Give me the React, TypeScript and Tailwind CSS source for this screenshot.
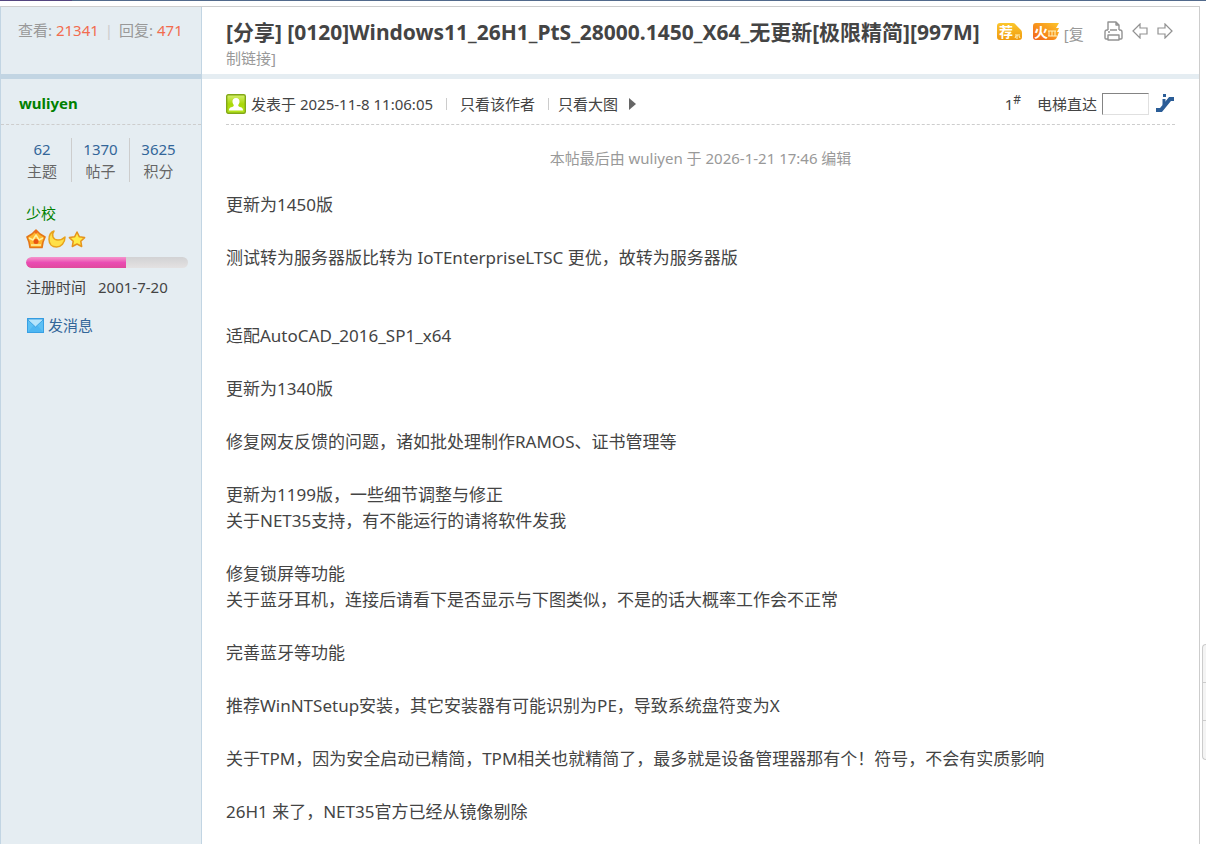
import { Fragment } from 'react';

interface Paragraph {
  lines: string[];
  wide?: boolean;
}

const stats = [
  { label: '主题', value: 62 },
  { label: '帖子', value: 1370 },
  { label: '积分', value: 3625 },
];

const paragraphs: Paragraph[] = [
  { lines: ['更新为1450版'] },
  { lines: ['测试转为服务器版比转为 IoTEnterpriseLTSC 更优，故转为服务器版'], wide: true },
  { lines: ['适配AutoCAD_2016_SP1_x64'] },
  { lines: ['更新为1340版'] },
  { lines: ['修复网友反馈的问题，诸如批处理制作RAMOS、证书管理等'] },
  { lines: ['更新为1199版，一些细节调整与修正', '关于NET35支持，有不能运行的请将软件发我'] },
  { lines: ['修复锁屏等功能', '关于蓝牙耳机，连接后请看下是否显示与下图类似，不是的话大概率工作会不正常'] },
  { lines: ['完善蓝牙等功能'] },
  { lines: ['推荐WinNTSetup安装，其它安装器有可能识别为PE，导致系统盘符变为X'] },
  { lines: ['关于TPM，因为安全启动已精简，TPM相关也就精简了，最多就是设备管理器那有个！符号，不会有实质影响'] },
  { lines: ['26H1 来了，NET35官方已经从镜像剔除'] },
];

function RecommendBadge() {
  return (
    <svg width="27" height="20" viewBox="0 0 27 20" aria-hidden="true">
      <defs>
        <linearGradient id="rec" x1="0" y1="0" x2="0" y2="1">
          <stop offset="0" stopColor="#fbc62c" />
          <stop offset="1" stopColor="#f09a0e" />
        </linearGradient>
      </defs>
      <path d="M4 1h13q2 0 3 2l5 5q1 1 1 3v4q0 3-3 3H4q-3 0-3-3V4q0-3 3-3z" fill="url(#rec)" />
      <text x="3" y="15" fontSize="14" fontWeight="700" fill="#fff">荐</text>
      <path d="M19 13h5M21 13v4M19 16l1-2M24 16l-1-2" stroke="#fff3c0" strokeWidth="1" fill="none" />
    </svg>
  );
}

function HotBadge() {
  return (
    <svg width="28" height="20" viewBox="0 0 28 20" aria-hidden="true">
      <defs>
        <linearGradient id="hot" x1="0" y1="1" x2="1" y2="0">
          <stop offset="0" stopColor="#f0601c" />
          <stop offset="0.5" stopColor="#f8941c" />
          <stop offset="1" stopColor="#fcc62c" />
        </linearGradient>
      </defs>
      <path d="M4 1h23l-3 5h3l-2 4h2l-2 5q-1 3-4 3H4q-3 0-3-3V4q0-3 3-3z" fill="url(#hot)" />
      <text x="2" y="15" fontSize="14" fontWeight="700" fill="#fff">火</text>
      <path d="M16 9h8M17 9v5M20 9v5M23 9v5M16 14h9" stroke="#fff3c0" strokeWidth="1" fill="none" />
    </svg>
  );
}

function PrintIcon() {
  return (
    <svg width="19" height="20" viewBox="0 0 19 20" fill="none" stroke="#929292" strokeWidth="1.4" strokeLinejoin="round">
      <path d="M4 9V1h8l3 3v5M12 1v3h3" />
      <path d="M4 9H3q-2 0-2 2v6q0 1 1 1h2M15 9h1q2 0 2 2v6q0 1-1 1h-2M6 9h7" />
      <path d="M4 14h11v5H4zM4 11h2" />
    </svg>
  );
}

function ArrowIcon({ flip }: { flip?: boolean }) {
  return (
    <svg
      className={flip ? 'rotate-180' : ''}
      width="16"
      height="16"
      viewBox="0 0 16 16"
      fill="none"
      stroke="#929292"
      strokeWidth="1.2"
      strokeLinejoin="miter"
    >
      <path d="M1 8l7-7v4h7v6H8v4z" />
    </svg>
  );
}

function OnlineIcon() {
  return (
    <svg width="20" height="20" viewBox="0 0 20 20" aria-hidden="true">
      <defs>
        <linearGradient id="online" x1="0" y1="0" x2="0" y2="1">
          <stop offset="0" stopColor="#d6f070" />
          <stop offset="0.5" stopColor="#a9d808" />
          <stop offset="1" stopColor="#b6e61e" />
        </linearGradient>
      </defs>
      <rect x="0.7" y="0.7" width="18.6" height="18.6" rx="1.5" fill="url(#online)" stroke="#82a818" strokeWidth="1.4" />
      <path d="M10 4c2.6 0 3.8 1.8 3.5 4-.2 1.5-.8 2.2-1.3 3 0 1.5 1 1.7 2.8 2.3 1.5.5 2 1.5 2 3.2H3c0-1.7.5-2.7 2-3.2 1.8-.6 2.8-.8 2.8-2.300-.5-.8-1.100-1.500-1.300-3C6.200 5.800 7.400 4 10 4z" fill="#fff" />
    </svg>
  );
}

function ElevatorIcon() {
  return (
    <svg width="20" height="19" viewBox="0 0 20 19" aria-hidden="true">
      <path d="M1 16h5L15 5h4" fill="none" stroke="#2b5d97" strokeWidth="4" />
      <path d="M9 5v6" stroke="#2b5d97" strokeWidth="3" />
      <rect x="8" y="0" width="3" height="3" fill="#2b5d97" />
    </svg>
  );
}

function RankIcons() {
  return (
    <svg width="60" height="20" viewBox="0 0 60 20" role="img" aria-label="少校" strokeLinejoin="round">
      <path d="M4 18.500L3 13 1 8l5-3 4-4 4 4 5 3-2 5-1 5.500z" fill="#ffb62e" stroke="#e37618" strokeWidth="1.600" />
      <path d="M3 9l4 2 3-5 3 5 4-2M5 16h10" fill="none" stroke="#fff0a0" strokeWidth="1.500" />
      <circle cx="10" cy="12.500" r="2.500" fill="#e85412" />
      <circle cx="10" cy="3" r="1.500" fill="#f06820" />
      <path d="M28 2c-3 4-1 9 4 9 3 0 5-1 7-3 0 6-4 10-8.500 10C26 18 23 15 23 10.500 23 6 25 3 28 2z" fill="#ffe048" stroke="#e8a21c" strokeWidth="1.500" />
      <path d="M51 3l2.400 4.800 5.200.8-3.800 3.700.9 5.200L51 15l-4.700 2.500.9-5.200-3.800-3.700 5.200-.8z" fill="#ffec48" stroke="#e6941c" strokeWidth="1.500" />
    </svg>
  );
}

function MailIcon() {
  return (
    <svg width="17" height="15" viewBox="0 0 17 15" aria-hidden="true">
      <rect x="0.500" y="0.500" width="16" height="14" fill="#5cc0f4" stroke="#38a0e4" />
      <path d="M1 14l5-6h5l5 6z" fill="#4db6f2" />
      <path d="M1 2l7.500 7L16 2V1H1z" fill="#b4e4fc" stroke="#2e98dc" strokeWidth="0.800" />
    </svg>
  );
}

function Sidebar() {
  return (
    <aside className="w-[201px] shrink-0 border-r border-[#c2d5e3] bg-[#e5edf2]">
      <div className="border-b border-dashed border-[#cdcdcd] px-[18px] pt-3 pb-[9px] leading-6">
        <a href="#user" className="font-bold text-[#008000]">wuliyen</a>
      </div>
      <div className="mx-3 mt-[13px] flex text-center leading-[22px]">
        {stats.map((s, i) => (
          <div key={s.label} className={i ? 'w-[58px] border-l border-[#cdcdcd]' : 'w-[58px]'}>
            <a href="#stat" className="block text-[#369]">{s.value}</a>
            <span className="block text-[#666]">{s.label}</span>
          </div>
        ))}
      </div>
      <div className="px-[25px] pt-[19px] leading-6">
        <a href="#group" className="block text-[#008000]">少校</a>
        <div className="pt-1">
          <RankIcons />
        </div>
        <div className="mt-2 h-[11px] w-[162px] overflow-hidden rounded-full bg-gradient-to-b from-[#d2d2d4] to-[#e4e2e2]">
          <div className="h-full w-[100px] rounded-l-full rounded-r-sm bg-gradient-to-b from-[#f594cc] via-[#ea4cb4] to-[#e0489c]" />
        </div>
        <dl className="mt-[7px] flex gap-3">
          <dt>注册时间</dt>
          <dd>2001-7-20</dd>
        </dl>
        <a href="#message" className="mt-[14px] flex items-center gap-1 pl-px text-[#369]">
          <MailIcon />
          发消息
        </a>
      </div>
    </aside>
  );
}

function PostHeader() {
  return (
    <div className="flex h-[46px] items-center border-b border-dashed border-[#cdcdcd] pt-1 leading-6 whitespace-nowrap">
      <OnlineIcon />
      <span className="ml-[5px]">发表于 2025-11-8 11:06:05</span>
      <span className="mx-[13px] h-3 w-px bg-[#ccc]" />
      <a href="#author">只看该作者</a>
      <span className="mr-[9px] ml-[13px] h-3 w-px bg-[#ccc]" />
      <a href="#images">只看大图</a>
      <span className="ml-[11px] border-y-[6px] border-l-[7px] border-y-transparent border-l-[#666]" />
      <div className="ml-auto flex items-center">
        <a href="#floor">
          1<sup className="text-[12px] leading-none">#</sup>
        </a>
        <label htmlFor="floor" className="mr-[5px] ml-4">电梯直达</label>
        <input
          id="floor"
          type="text"
          className="h-[22px] w-[47px] border border-[#e0e0e0] border-t-[#848484] border-l-[#848484] bg-white px-1 outline-none"
        />
        <button type="button" aria-label="跳转到指定楼层" className="ml-[6px]">
          <ElevatorIcon />
        </button>
      </div>
    </div>
  );
}

export default function App() {
  return (
    <div className="min-h-screen bg-white font-['Noto_Sans','Noto_Sans_CJK_SC',sans-serif] text-[15px] text-[#444]" lang="zh-CN">
      <div className="flex h-[6px]">
        <div className="h-px w-[72px] bg-[#54457f]" />
        <div className="h-px flex-1 bg-[#526a8c]" />
      </div>
      <main className="mr-[6px] flex min-h-screen flex-col border border-[#cdcdcd] border-l-[#c2d5e3]">
        <header className="flex">
          <div className="w-[201px] shrink-0 border-r border-b-[5px] border-[#c2d5e3] bg-[#e5edf2] px-[17px] pt-[11px] leading-6 whitespace-nowrap text-[#999]">
            查看: <span className="text-[#f26c4f]">21341</span>
            <span className="mx-[6px] text-[#ccc]">|</span>
            回复: <span className="text-[#f26c4f]">471</span>
          </div>
          <div className="flex flex-1 items-start gap-2 border-b-[5px] border-[#e5edf2] px-6 pt-[13px] pb-1">
            <div className="flex-1 leading-6">
              <h1 className="inline text-[21px] leading-6 font-bold">
                <a href="#type">[分享]</a> [0120]Windows11_26H1_PtS_28000.1450_X64_无更新[极限精简][997M]
              </h1>
              <span className="ml-4 inline-flex h-6 items-center gap-[9px] align-top">
                <RecommendBadge />
                <HotBadge />
              </span>
              <a href="#copy" className="ml-1 text-[#999]">[复制链接]</a>
            </div>
            <div className="flex items-center gap-[9px] pt-px pr-0.5">
              <button type="button" aria-label="打印"><PrintIcon /></button>
              <button type="button" aria-label="上一主题"><ArrowIcon /></button>
              <button type="button" aria-label="下一主题"><ArrowIcon flip /></button>
            </div>
          </div>
        </header>
        <div className="flex flex-1">
          <Sidebar />
          <article className="min-w-0 flex-1 px-6 pb-6">
            <PostHeader />
            <p className="mt-[21px] text-center leading-6 text-[#999]">本帖最后由 wuliyen 于 2026-1-21 17:46 编辑</p>
            <div className="mt-[22px] text-[17px] leading-[26px]">
              {paragraphs.map((p) => (
                <p key={p.lines[0]} className={p.wide ? 'mb-[52px]' : 'mb-[27px]'}>
                  {p.lines.map((line, i) => (
                    <Fragment key={line}>
                      {i > 0 && <br />}
                      {line}
                    </Fragment>
                  ))}
                </p>
              ))}
            </div>
          </article>
        </div>
      </main>
      <div className="fixed right-0 bottom-[84px] w-1 divide-y divide-[#ccc] rounded-l border border-r-0 border-[#ccc] bg-[#f4f4f4]">
        <div className="h-[38px]" />
        <div className="h-[38px]" />
        <div className="h-[38px]" />
      </div>
    </div>
  );
}
